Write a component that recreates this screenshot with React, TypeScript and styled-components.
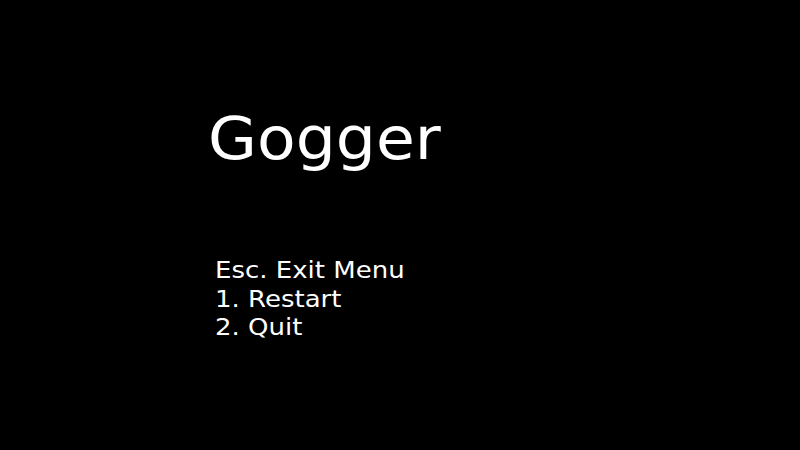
import React from "react";
import styled, { createGlobalStyle } from "styled-components";

const Global = createGlobalStyle`
  html, body { margin: 0; padding: 0; background: #000; }
  body { width: 800px; height: 450px; overflow: hidden; }
`;

const Screen = styled.div`
  width: 800px;
  height: 450px;
  background: #000;
  color: #fff;
  font-family: "DejaVu Sans", "Open Sans", sans-serif;
  box-sizing: border-box;
  padding: 110px 0 0 208px;
  display: flex;
  flex-direction: column;
  align-items: flex-start;
`;

const Title = styled.h1`
  margin: 0;
  font-size: 58px;
  font-weight: 400;
  line-height: 58px;
  transform: scaleX(1.09);
  transform-origin: left center;
`;

const Menu = styled.ul`
  list-style: none;
  margin: 88px 0 0 7px;
  padding: 0;
  display: flex;
  flex-direction: column;
  transform: scaleX(1.13);
  transform-origin: left center;
`;

const Item = styled.li`
  font-size: 23px;
  line-height: 28.5px;
`;

const items = ["Esc. Exit Menu", "1. Restart", "2. Quit"];

export default function App() {
  return (
    <>
      <Global />
      <Screen>
        <Title>Gogger</Title>
        <Menu>
          {items.map((t) => (
            <Item key={t}>{t}</Item>
          ))}
        </Menu>
      </Screen>
    </>
  );
}
